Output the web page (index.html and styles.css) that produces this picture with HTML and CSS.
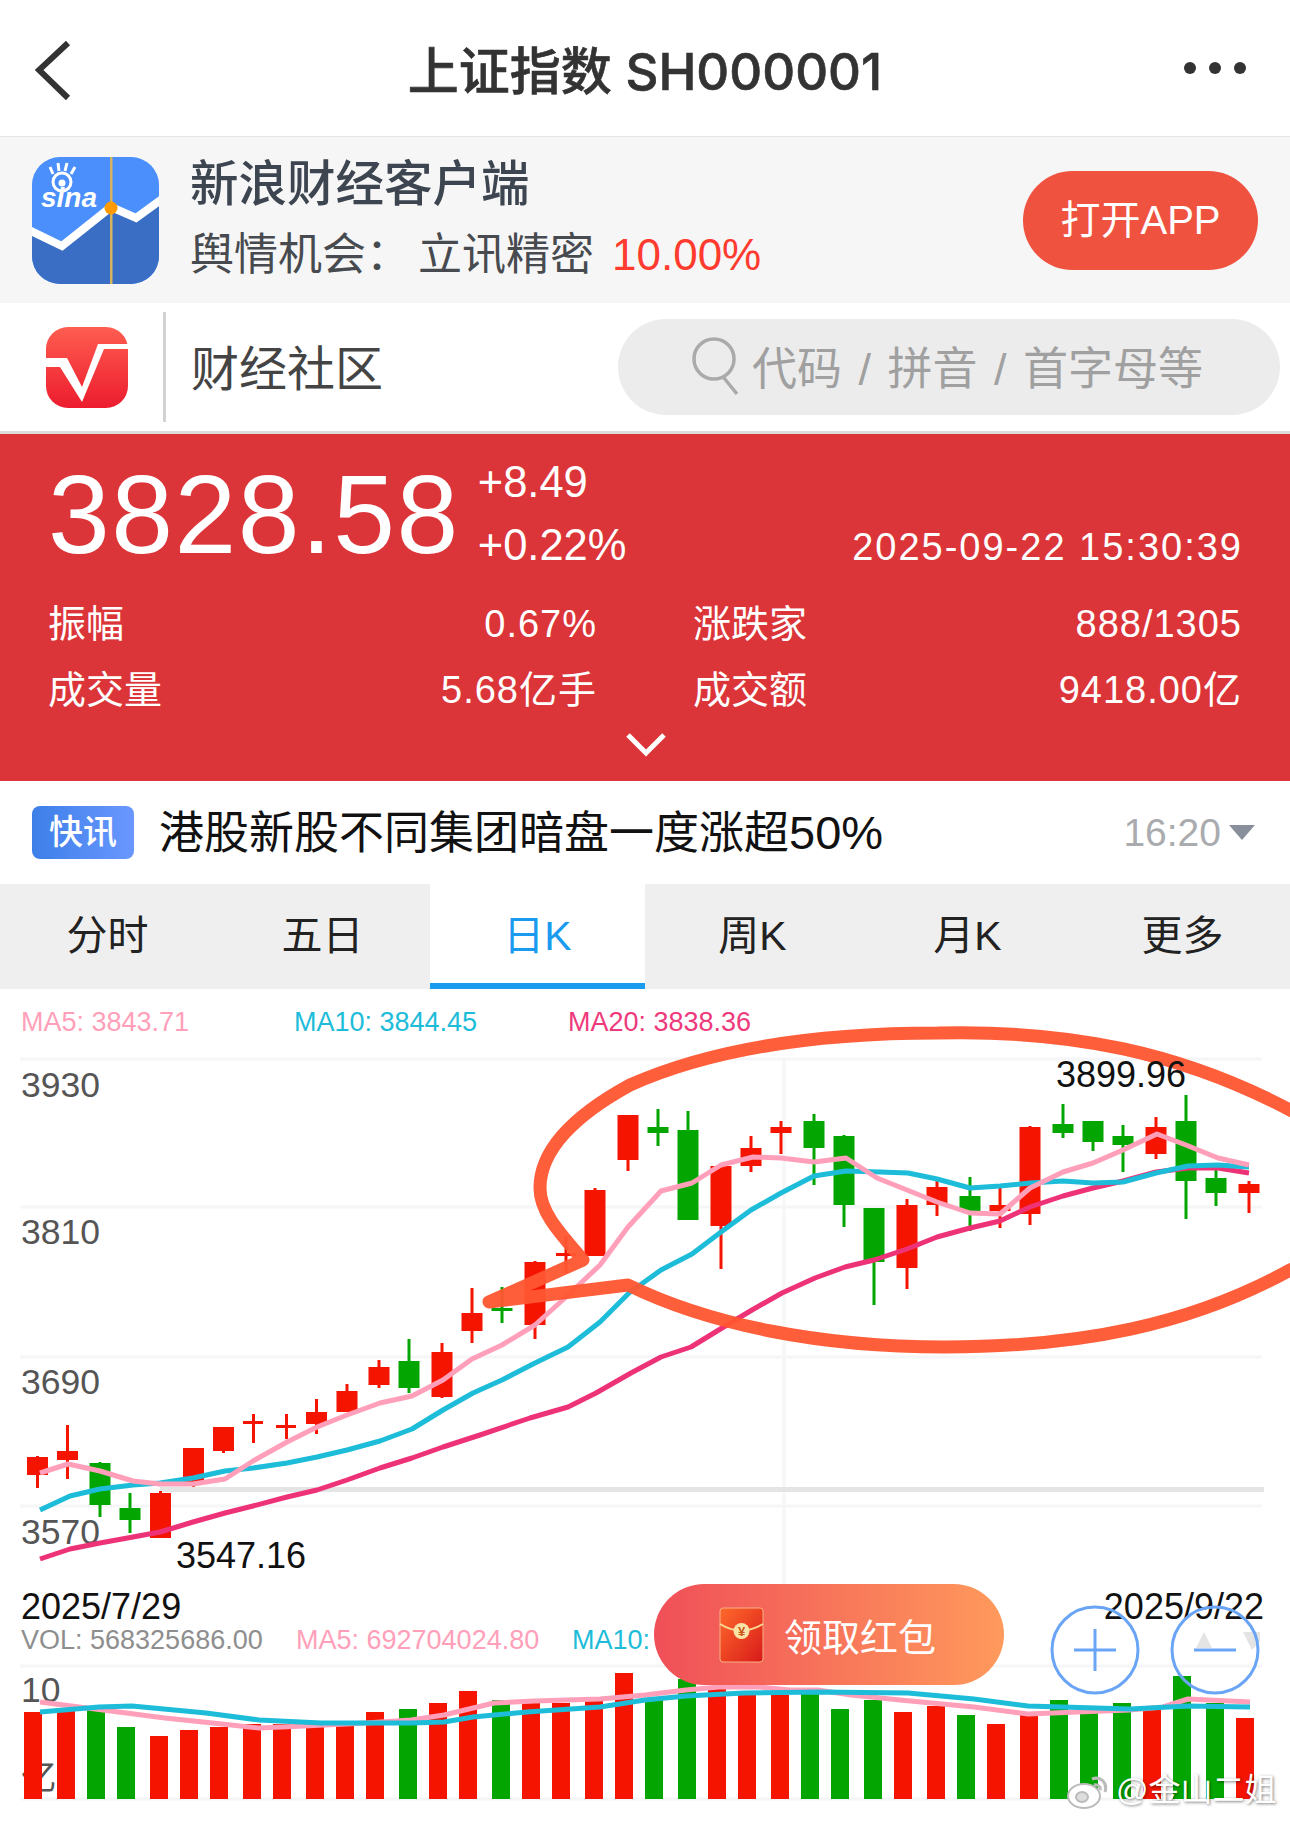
FILE: index.html
```html
<!DOCTYPE html>
<html lang="zh">
<head>
  <meta charset="utf-8">
  <title>上证指数 SH000001</title>
  <link rel="stylesheet" href="styles.css">
</head>
<body>

<div class="topbar">
  <svg class="back" width="40" height="64" viewBox="0 0 40 64"><path d="M33 3L4 30L33 58"/></svg>
  <div class="title">上证指数 SH000001</div>
  <div class="dots"><span></span><span></span><span></span></div>
</div>

<div class="banner">
  <svg class="app-icon" width="127" height="127" viewBox="0 0 127 127">
    <defs><clipPath id="iconClip"><rect width="127" height="127" rx="28"/></clipPath></defs>
    <g clip-path="url(#iconClip)">
      <rect width="127" height="127" fill="#4a8ffb"/>
      <path d="M0 74L30 89L79 50L104 61L127 44V127H0Z" fill="#3a6ec4"/>
      <path d="M-3 73L30 89L79 50L104 61L130 42" fill="none" stroke="#fff" stroke-width="8"/>
      <rect x="78" width="2.5" height="127" fill="#d5b35f"/>
      <circle cx="79" cy="51" r="6.5" fill="#ff9a00"/>
      <circle cx="30" cy="25" r="9" fill="none" stroke="#fff" stroke-width="3"/>
      <circle cx="30" cy="26" r="3.5" fill="#fff"/>
      <path d="M21 17L18 10M27 14L26 6M33 14L35 6M39 17L43 10" stroke="#fff" stroke-width="3"/>
      <text class="sina-mark" x="9" y="50">sina</text>
    </g>
  </svg>
  <div class="banner-text">
    <div class="banner-name">新浪财经客户端</div>
    <div class="banner-sub"><span>舆情机会：</span><span class="banner-stock">立讯精密</span><span class="banner-pct">10.00%</span></div>
  </div>
  <div class="open-app">打开APP</div>
</div>

<div class="community">
  <svg class="community-logo" width="82" height="81" viewBox="0 0 82 81">
    <defs>
      <linearGradient id="logoRed" x1="0" y1="0" x2="0" y2="1">
        <stop offset="0" stop-color="#ff5d50"/>
        <stop offset="1" stop-color="#ec1c2e"/>
      </linearGradient>
    </defs>
    <rect width="82" height="81" rx="22" fill="url(#logoRed)"/>
    <path d="M0 31H21L36 60L52 17H82V22H58L36 75L14 40H0Z" fill="#fff"/>
  </svg>
  <div class="community-line"></div>
  <div class="community-name">财经社区</div>
  <div class="search">
    <svg width="46" height="66" viewBox="0 0 46 66"><circle cx="22" cy="25" r="20"/><path d="M32 44L45 60"/></svg>
    <span>代码 / 拼音 / 首字母等</span>
  </div>
</div>

<div class="quote">
  <div class="quote-top">
    <div class="price">3828.58</div>
    <div class="change"><div>+8.49</div><div>+0.22%</div></div>
    <div class="quote-time">2025-09-22 15:30:39</div>
  </div>
  <div class="stats">
    <div class="stat"><span>振幅</span><span class="stat-value">0.67%</span></div>
    <div class="stat"><span>涨跌家</span><span class="stat-value">888/1305</span></div>
    <div class="stat"><span>成交量</span><span class="stat-value">5.68亿手</span></div>
    <div class="stat"><span>成交额</span><span class="stat-value">9418.00亿</span></div>
  </div>
  <svg class="expand" width="44" height="28" viewBox="0 0 44 28"><path d="M4 4L22 22L40 4"/></svg>
</div>

<div class="news">
  <div class="news-tag">快讯</div>
  <div class="news-text">港股新股不同集团暗盘一度涨超<span class="news-num">50%</span></div>
  <div class="news-time">16:20</div>
  <div class="news-arrow"></div>
</div>

<div class="tabs">
  <div class="tab">分时</div>
  <div class="tab">五日</div>
  <div class="tab active">日K</div>
  <div class="tab">周K</div>
  <div class="tab">月K</div>
  <div class="tab">更多</div>
</div>

<div class="chart">
  <svg class="plot" width="1290" height="833" viewBox="0 989 1290 833">
    <g class="grid">
      <line x1="20" y1="1059" x2="1262" y2="1059"/>
      <line x1="20" y1="1207" x2="1262" y2="1207"/>
      <line x1="20" y1="1357" x2="1262" y2="1357"/>
      <line x1="20" y1="1506" x2="1262" y2="1506"/>
      <line x1="784" y1="1059" x2="784" y2="1585"/>
      <line x1="20" y1="1666" x2="1262" y2="1666"/>
      <line x1="20" y1="1799" x2="1262" y2="1799"/>
    </g>
    <rect class="last-close" x="160" y="1487" width="1104" height="5"/>

    <text class="legend ma5" x="21" y="1031">MA5: 3843.71</text>
    <text class="legend ma10" x="294" y="1031">MA10: 3844.45</text>
    <text class="legend ma20" x="568" y="1031">MA20: 3838.36</text>

    <text class="axis" x="21" y="1097">3930</text>
    <text class="axis" x="21" y="1244">3810</text>
    <text class="axis" x="21" y="1394">3690</text>
    <text class="axis" x="21" y="1544">3570</text>
    <text class="axis" x="21" y="1702">10</text>
    <text class="axis" x="21" y="1790">亿</text>

    <g class="up">
      <line x1="37.5" y1="1456" x2="37.5" y2="1488"/><rect x="27" y="1457" width="21" height="18"/>
      <line x1="67.5" y1="1425" x2="67.5" y2="1479"/><rect x="57" y="1451" width="21" height="9"/>
      <line x1="160.5" y1="1491" x2="160.5" y2="1538"/><rect x="150" y="1493" width="21" height="45"/>
      <line x1="193.5" y1="1448" x2="193.5" y2="1487"/><rect x="183" y="1448" width="21" height="36"/>
      <line x1="223.5" y1="1427" x2="223.5" y2="1453"/><rect x="213" y="1427" width="21" height="24"/>
      <line x1="253.5" y1="1414" x2="253.5" y2="1443"/><rect x="243" y="1421" width="20" height="3"/>
      <line x1="286.5" y1="1414" x2="286.5" y2="1439"/><rect x="276" y="1425" width="20" height="3"/>
      <line x1="316.5" y1="1399" x2="316.5" y2="1434"/><rect x="306" y="1412" width="21" height="12"/>
      <line x1="347" y1="1384" x2="347" y2="1412"/><rect x="336.5" y="1391" width="21" height="21"/>
      <line x1="379" y1="1360" x2="379" y2="1388"/><rect x="368.5" y="1367" width="21" height="18"/>
      <line x1="442" y1="1343" x2="442" y2="1398"/><rect x="431.5" y="1352" width="21" height="45"/>
      <line x1="472" y1="1288" x2="472" y2="1343"/><rect x="461.5" y="1313" width="21" height="18"/>
      <line x1="535" y1="1261" x2="535" y2="1339"/><rect x="524.5" y="1262" width="21" height="63"/>
      <line x1="566" y1="1236" x2="566" y2="1273"/><rect x="556" y="1253" width="20" height="3"/>
      <line x1="595" y1="1188" x2="595" y2="1256"/><rect x="584.5" y="1190" width="21" height="66"/>
      <line x1="628" y1="1115" x2="628" y2="1171"/><rect x="617.5" y="1115" width="21" height="45"/>
      <line x1="721" y1="1166" x2="721" y2="1269"/><rect x="710.5" y="1166" width="21" height="60"/>
      <line x1="751" y1="1136" x2="751" y2="1172"/><rect x="740.5" y="1148" width="21" height="18"/>
      <line x1="781" y1="1121" x2="781" y2="1154"/><rect x="770.5" y="1127" width="21" height="6"/>
      <line x1="907" y1="1199" x2="907" y2="1289"/><rect x="896.5" y="1205" width="21" height="63"/>
      <line x1="937" y1="1181" x2="937" y2="1216"/><rect x="926.5" y="1187" width="21" height="18"/>
      <line x1="1000" y1="1188" x2="1000" y2="1228"/><rect x="989.5" y="1205" width="21" height="6"/>
      <line x1="1030" y1="1126" x2="1030" y2="1225"/><rect x="1019.5" y="1127" width="21" height="87"/>
      <line x1="1156" y1="1117" x2="1156" y2="1159"/><rect x="1145.5" y="1127" width="21" height="27"/>
      <line x1="1249" y1="1181" x2="1249" y2="1213"/><rect x="1238.5" y="1184" width="21" height="9"/>
    </g>
    <g class="down">
      <line x1="100" y1="1462" x2="100" y2="1517"/><rect x="89.5" y="1463" width="21" height="42"/>
      <line x1="130" y1="1493" x2="130" y2="1533"/><rect x="119.5" y="1508" width="21" height="12"/>
      <line x1="409" y1="1339" x2="409" y2="1393"/><rect x="398.5" y="1361" width="21" height="27"/>
      <line x1="502" y1="1287" x2="502" y2="1323"/><rect x="491.5" y="1308" width="21" height="3"/>
      <line x1="658" y1="1109" x2="658" y2="1146"/><rect x="647.5" y="1127" width="21" height="6"/>
      <line x1="688" y1="1111" x2="688" y2="1220"/><rect x="677.5" y="1130" width="21" height="90"/>
      <line x1="814" y1="1114" x2="814" y2="1185"/><rect x="803.5" y="1121" width="21" height="27"/>
      <line x1="844" y1="1135" x2="844" y2="1227"/><rect x="833.5" y="1136" width="21" height="69"/>
      <line x1="874" y1="1208" x2="874" y2="1305"/><rect x="863.5" y="1208" width="21" height="54"/>
      <line x1="970" y1="1177" x2="970" y2="1231"/><rect x="959.5" y="1196" width="21" height="15"/>
      <line x1="1063" y1="1104" x2="1063" y2="1138"/><rect x="1052.5" y="1124" width="21" height="9"/>
      <line x1="1093" y1="1121" x2="1093" y2="1151"/><rect x="1082.5" y="1121" width="21" height="21"/>
      <line x1="1123" y1="1125" x2="1123" y2="1172"/><rect x="1112.5" y="1136" width="21" height="9"/>
      <line x1="1186" y1="1095" x2="1186" y2="1219"/><rect x="1175.5" y="1121" width="21" height="60"/>
      <line x1="1216" y1="1168" x2="1216" y2="1206"/><rect x="1205.5" y="1178" width="21" height="15"/>
    </g>

    <polyline class="line-ma20" points="40,1559 70,1549 100,1543 133,1537 160,1532 193,1522 225,1513 253,1506 287,1497 317,1490 347,1480 380,1468 412,1458 443,1447 480,1435 530,1418 568,1407 596,1393 631,1373 661,1357 691,1347 722,1328 752,1310 782,1293 815,1278 845,1267 874,1260 907,1249 937,1237 970,1228 1000,1221 1030,1207 1063,1196 1093,1188 1123,1181 1156,1172 1188,1168 1218,1168 1249,1173"/>
    <polyline class="line-ma10" points="40,1510 70,1496 100,1489 133,1485 160,1483 193,1478 225,1471 253,1468 287,1463 317,1457 347,1450 380,1441 412,1429 443,1410 473,1393 502,1380 535,1363 568,1347 600,1322 629,1293 661,1270 692,1254 721,1232 751,1210 781,1193 814,1176 846,1171 880,1172 908,1173 937,1179 970,1188 1000,1186 1030,1183 1063,1181 1093,1183 1123,1182 1156,1173 1188,1166 1218,1165 1249,1167"/>
    <polyline class="line-ma5" points="40,1473 68,1464 100,1471 133,1481 160,1484 193,1484 225,1479 253,1461 287,1442 317,1427 347,1415 380,1403 412,1396 443,1380 472,1359 502,1345 535,1325 566,1297 600,1265 628,1227 661,1191 692,1183 721,1165 753,1157 781,1158 814,1162 846,1158 877,1178 907,1190 937,1202 970,1213 1000,1214 1030,1188 1063,1172 1093,1163 1123,1150 1157,1134 1186,1145 1218,1158 1249,1165"/>

    <text class="mark" x="176" y="1568">3547.16</text>
    <text class="mark" x="21" y="1619">2025/7/29</text>
    <text class="mark" x="1264" y="1619" text-anchor="end">2025/9/22</text>

    <text class="legend vol" x="21" y="1649">VOL: 568325686.00</text>
    <text class="legend ma5" x="296" y="1649">MA5: 692704024.80</text>
    <text class="legend ma10" x="572" y="1649">MA10:</text>

    <g class="up">
      <rect x="24" y="1712" width="18" height="87"/>
      <rect x="57" y="1710" width="18" height="89"/>
      <rect x="150" y="1736" width="18" height="63"/>
      <rect x="180" y="1730" width="18" height="69"/>
      <rect x="210" y="1727" width="18" height="72"/>
      <rect x="243" y="1724" width="18" height="75"/>
      <rect x="273" y="1724" width="18" height="75"/>
      <rect x="306" y="1724" width="18" height="75"/>
      <rect x="336" y="1724" width="18" height="75"/>
      <rect x="366" y="1712" width="18" height="87"/>
      <rect x="429" y="1703" width="18" height="96"/>
      <rect x="459" y="1691" width="18" height="108"/>
      <rect x="522" y="1703" width="18" height="96"/>
      <rect x="552" y="1703" width="18" height="96"/>
      <rect x="585" y="1700" width="18" height="99"/>
      <rect x="615" y="1673" width="18" height="126"/>
      <rect x="708" y="1688" width="18" height="111"/>
      <rect x="738" y="1695" width="18" height="104"/>
      <rect x="771" y="1695" width="18" height="104"/>
      <rect x="894" y="1712" width="18" height="87"/>
      <rect x="927" y="1706" width="18" height="93"/>
      <rect x="987" y="1724" width="18" height="75"/>
      <rect x="1020" y="1715" width="18" height="84"/>
      <rect x="1143" y="1710" width="18" height="89"/>
      <rect x="1236" y="1718" width="18" height="81"/>
    </g>
    <g class="down">
      <rect x="87" y="1710" width="18" height="89"/>
      <rect x="117" y="1727" width="18" height="72"/>
      <rect x="399" y="1709" width="18" height="90"/>
      <rect x="492" y="1700" width="18" height="99"/>
      <rect x="645" y="1700" width="18" height="99"/>
      <rect x="678" y="1679" width="18" height="120"/>
      <rect x="801" y="1693" width="18" height="106"/>
      <rect x="831" y="1709" width="18" height="90"/>
      <rect x="864" y="1700" width="18" height="99"/>
      <rect x="957" y="1715" width="18" height="84"/>
      <rect x="1050" y="1700" width="18" height="99"/>
      <rect x="1080" y="1709" width="18" height="90"/>
      <rect x="1113" y="1703" width="18" height="96"/>
      <rect x="1173" y="1676" width="18" height="123"/>
      <rect x="1206" y="1703" width="18" height="96"/>
    </g>

    <polyline class="line-ma5" points="40,1702 103,1710 165,1718 222,1724 259,1728 304,1726 366,1723 411,1720 444,1715 494,1703 535,1701 600,1699 645,1695 686,1690 719,1687 760,1687 789,1690 818,1690 851,1695 900,1700 974,1707 1028,1714 1077,1712 1130,1710 1163,1707 1188,1699 1250,1702"/>
    <polyline class="line-ma10" points="40,1712 99,1707 132,1706 206,1713 259,1720 321,1723 411,1723 444,1722 473,1717 527,1712 600,1707 645,1700 686,1696 744,1693 818,1692 908,1693 974,1699 1028,1706 1130,1709 1188,1706 1250,1707"/>

    <path class="scribble" d="M489 1302L583 1260C555 1228 540 1210 540 1188C540 1150 575 1115 630 1085C720 1045 830 1033 938 1033C1070 1030 1180 1052 1290 1110C1310 1120 1330 1130 1340 1140V1240C1320 1255 1305 1262 1290 1270C1190 1325 1080 1347 945 1347C820 1347 710 1325 628 1285Z"/>
    <text class="mark" x="1056" y="1087">3899.96</text>
  </svg>

  <div class="red-packet">
    <svg width="45" height="56" viewBox="0 0 45 56">
      <defs>
        <linearGradient id="packetRed" x1="0" y1="0" x2="1" y2="1">
          <stop offset="0" stop-color="#ff6a2c"/>
          <stop offset="1" stop-color="#d81a1a"/>
        </linearGradient>
      </defs>
      <rect x="1" y="1" width="43" height="54" rx="3" fill="url(#packetRed)" stroke="#f7b184"/>
      <path d="M1 17Q22 30 44 17" fill="none" stroke="#f9d893" stroke-width="2"/>
      <circle cx="22.5" cy="24" r="8" fill="#fbe3a6"/>
      <text class="packet-coin" x="22.5" y="29" text-anchor="middle">¥</text>
    </svg>
    <span>领取红包</span>
  </div>

  <svg class="zoom-btn zoom-in" width="90" height="90" viewBox="0 0 90 90">
    <circle cx="45" cy="45" r="43"/><path d="M24 45H66M45 24V66"/>
  </svg>
  <svg class="zoom-btn zoom-out" width="90" height="90" viewBox="0 0 90 90">
    <path class="zoom-tri" d="M34 27L42 43H26Z"/>
    <path class="zoom-tri" d="M73 27H90V36L82 45Z"/>
    <circle cx="45" cy="45" r="43"/><path d="M24 45H66"/>
  </svg>

  <div class="watermark">
    <svg width="46" height="40" viewBox="0 0 46 40">
      <ellipse cx="18" cy="26" rx="16" ry="12"/>
      <ellipse class="weibo-eye" cx="16" cy="27" rx="6" ry="5"/>
      <path class="weibo-arc" d="M26 9C34 6 42 12 39 22M28 15C32 14 35 17 34 20"/>
    </svg>
    <span>@金山二姐</span>
  </div>
</div>

</body>
</html>
```

FILE: styles.css
```css
* {
  box-sizing: border-box;
}

html, body {
  margin: 0;
  padding: 0;
}

body {
  width: 1290px;
  height: 1822px;
  overflow: hidden;
  background: #fff;
  color: #333;
  font-family: "Liberation Sans", "Noto Sans CJK SC", sans-serif;
}

/* top bar */
.topbar {
  display: grid;
  grid-template-columns: 1fr auto 1fr;
  align-items: center;
  height: 137px;
  padding: 0 40px;
  border-bottom: 1px solid #e6e6e6;
}

.back {
  margin: 8px 0 0 -5px;
}

.back path {
  fill: none;
  stroke: #333;
  stroke-width: 6;
}

.title {
  font-family: Inter, "Noto Sans CJK SC", sans-serif;
  font-size: 51px;
  font-weight: 500;
  -webkit-text-stroke: 0.6px #333;
  color: #333;
}

.dots {
  display: flex;
  justify-content: flex-end;
  gap: 13px;
  margin-right: 4px;
}

.dots span {
  width: 12px;
  height: 12px;
  border-radius: 50%;
  background: #333;
}

/* app banner */
.banner {
  display: flex;
  align-items: center;
  height: 166px;
  padding: 0 32px;
  background: #f6f6f6;
}

.banner-text {
  margin-left: 31px;
}

.banner-name {
  font-size: 48.5px;
  font-weight: 500;
  line-height: 66px;
  color: #3d4550;
}

.banner-sub {
  margin-top: 3px;
  font-size: 44px;
  line-height: 70px;
  color: #474b50;
}

.banner-stock {
  margin-left: 8px;
}

.banner-pct {
  margin-left: 18px;
  color: #ff3b2f;
}

.open-app {
  margin-left: auto;
  width: 235px;
  height: 99px;
  border-radius: 50px;
  background: #f05240;
  color: #fff;
  font-size: 40px;
  line-height: 99px;
  text-align: center;
}

/* community row */
.community {
  display: flex;
  align-items: center;
  height: 131px;
  padding-left: 46px;
  border-bottom: 3px solid #ddd;
}

.community-line {
  width: 3px;
  height: 110px;
  margin-left: 35px;
  background: #d2d2d2;
}

.community-name {
  margin: 0 0 4px 25px;
  font-size: 48px;
  color: #444;
}

.search {
  display: flex;
  align-items: center;
  gap: 14px;
  width: 662px;
  height: 96px;
  margin-left: auto;
  margin-right: 10px;
  padding-left: 74px;
  border-radius: 48px;
  background: #ececec;
  color: #a0a0a0;
  font-size: 45px;
  word-spacing: 4px;
}

.search span {
  margin-bottom: 4px;
}

.search circle, .search path {
  fill: none;
  stroke: #aaa;
  stroke-width: 3.5;
}

/* quote panel */
.quote {
  height: 347px;
  padding: 19px 47px 0 48px;
  background: #dc3539;
  color: #fff;
}

.quote-top {
  display: flex;
  align-items: flex-start;
  height: 124px;
}

.price {
  font-size: 111px;
  line-height: 124px;
  letter-spacing: 1.5px;
}

.change {
  margin: -2px 0 0 18px;
  font-size: 43.5px;
  line-height: 63px;
}

.quote-time {
  margin: 72px 0 0 auto;
  font-size: 38px;
  line-height: 44px;
  letter-spacing: 2px;
}

.stats {
  display: grid;
  grid-template-columns: 549px 549px;
  column-gap: 96px;
  margin-top: 14px;
}

.stat {
  display: flex;
  justify-content: space-between;
  font-size: 38px;
  line-height: 66px;
}

.stat-value {
  letter-spacing: 1px;
}

.expand {
  display: block;
  margin: 8px auto 0;
}

.expand path {
  fill: none;
  stroke: #fff;
  stroke-width: 5;
}

/* news ticker */
.news {
  display: flex;
  align-items: center;
  height: 103px;
  padding: 0 35px 0 32px;
}

.news-tag {
  width: 102px;
  height: 53px;
  border-radius: 8px;
  background: linear-gradient(90deg, #3d7fe8, #6a97ff);
  color: #fff;
  font-size: 34px;
  font-weight: 500;
  line-height: 53px;
  text-align: center;
}

.news-text {
  margin: 0 0 6px 25px;
  font-size: 45px;
  color: #111;
}

.news-num {
  font-size: 47px;
}

.news-time {
  margin-left: auto;
  font-size: 39px;
  color: #a9abae;
}

.news-arrow {
  width: 0;
  height: 0;
  margin-left: 8px;
  border-left: 13px solid transparent;
  border-right: 13px solid transparent;
  border-top: 15px solid #8a8f9c;
}

/* period tabs */
.tabs {
  display: flex;
  height: 105px;
  background: #efefef;
}

.tab {
  flex: 1;
  font-size: 41px;
  line-height: 104px;
  text-align: center;
  color: #222;
}

.tab.active {
  background: #fff;
  border-bottom: 6px solid #1a9bf0;
  color: #1a9bf0;
}

/* chart */
.chart {
  position: relative;
  height: 833px;
  overflow: hidden;
}

.plot {
  display: block;
}

.grid line {
  stroke: #f5f6f7;
  stroke-width: 3;
}

.last-close {
  fill: #e4e4e4;
}

.legend {
  font-size: 27px;
}

.ma5 {
  fill: #ff9fba;
}

.ma10 {
  fill: #1dbcd9;
}

.ma20 {
  fill: #ee3a7c;
}

.vol {
  fill: #8e8e8e;
}

.axis {
  font-size: 35.5px;
  fill: #555;
}

.mark {
  font-size: 36px;
  fill: #111;
}

.up line {
  stroke: #f41400;
  stroke-width: 3;
}

.up rect {
  fill: #f41400;
}

.down line {
  stroke: #03a600;
  stroke-width: 3;
}

.down rect {
  fill: #03a600;
}

.line-ma5, .line-ma10, .line-ma20 {
  fill: none;
  stroke-width: 5;
  stroke-linejoin: round;
}

.line-ma5 {
  stroke: #ff9fba;
}

.line-ma10 {
  stroke: #1dbcd9;
}

.line-ma20 {
  stroke: #ee3277;
}

.scribble {
  fill: none;
  stroke: #ff5530;
  stroke-width: 13;
  stroke-linejoin: round;
  stroke-linecap: round;
  opacity: 0.95;
}

/* icons */
.sina-mark {
  font-size: 28px;
  font-style: italic;
  font-weight: 700;
  fill: #fff;
}

.packet-coin {
  font-size: 13px;
  font-weight: 700;
  fill: #c8541c;
}

/* things lying over the chart */
.red-packet {
  position: absolute;
  left: 654px;
  top: 595px;
  display: flex;
  align-items: center;
  gap: 20px;
  width: 350px;
  height: 101px;
  padding-left: 65px;
  border-radius: 51px;
  background: linear-gradient(90deg, #f04f58, #ff9a5c);
  color: #fff;
  font-size: 38px;
}

.zoom-btn {
  position: absolute;
  top: 616px;
}

.zoom-in {
  left: 1050px;
}

.zoom-out {
  left: 1170px;
}

.zoom-btn circle {
  fill: none;
  stroke: #6aa5f5;
  stroke-width: 3;
}

.zoom-btn path {
  fill: none;
  stroke: #6aa5f5;
  stroke-width: 3;
}

.zoom-btn path.zoom-tri {
  fill: #e4e4e4;
  stroke: none;
}

.watermark {
  position: absolute;
  left: 1066px;
  top: 781px;
  display: flex;
  align-items: center;
  gap: 4px;
  color: #fff;
  font-size: 32px;
  line-height: 40px;
  text-shadow: 1px 1px 3px rgba(0, 0, 0, 0.5);
}

.watermark ellipse {
  fill: #fff;
  stroke: #bbb;
  stroke-width: 2;
}

.watermark .weibo-eye {
  fill: #ddd;
}

.weibo-arc {
  fill: none;
  stroke: #bbb;
  stroke-width: 3;
}
```
